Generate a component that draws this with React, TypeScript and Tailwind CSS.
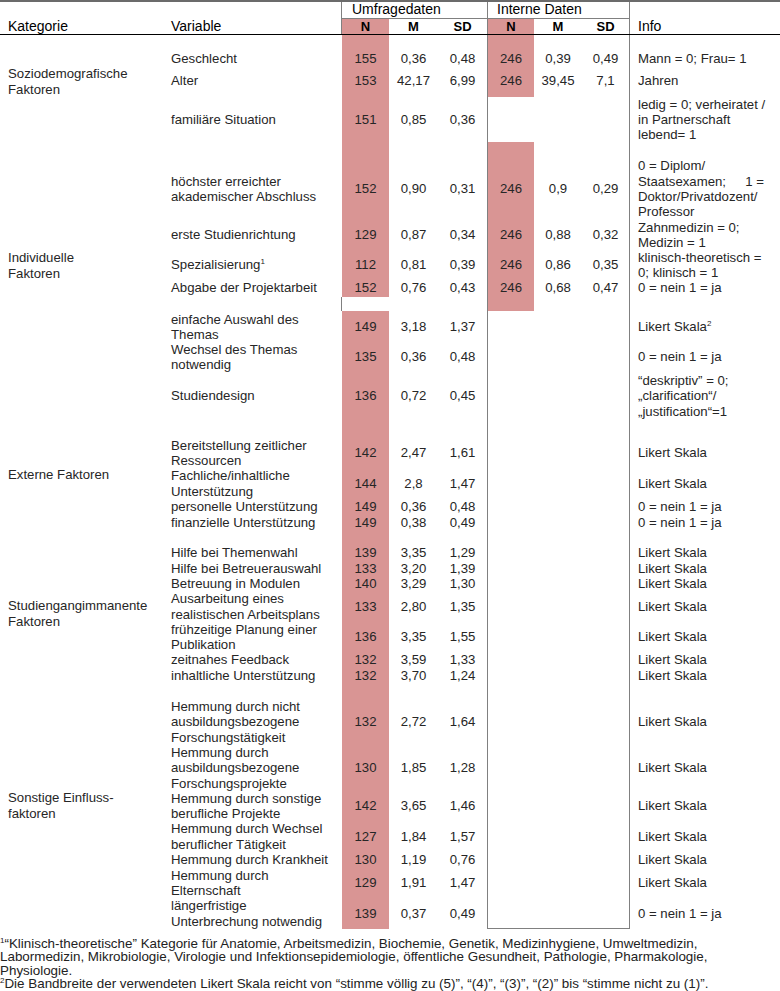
import React from "react";

type Row = {
  v: string[];
  n: string;
  m: string;
  sd: string;
  iN?: string;
  iM?: string;
  iSD?: string;
  info: React.ReactNode[];
  h: string;
  pad: string;
  uPink: boolean;
  iPink: boolean;
};

type Group = {
  label: string[];
  labelPad: string;
  rows: Row[];
};

const Sup: React.FC<{ children: React.ReactNode }> = ({ children }) => (
  <span className="relative -top-[5px] text-[8px] leading-none">{children}</span>
);

const likert = ["Likert Skala"];
const neinJa = ["0 = nein 1 = ja"];

const groups: Group[] = [
  {
    label: ["Soziodemografische", "Faktoren"],
    labelPad: "pb-[14px]",
    rows: [
      { v: ["Geschlecht"], n: "155", m: "0,36", sd: "0,48", iN: "246", iM: "0,39", iSD: "0,49", info: ["Mann = 0; Frau= 1"], h: "h-[35px]", pad: "pt-[13px]", uPink: true, iPink: true },
      { v: ["Alter"], n: "153", m: "42,17", sd: "6,99", iN: "246", iM: "39,45", iSD: "7,1", info: ["Jahren"], h: "h-[27px]", pad: "pb-[5px]", uPink: true, iPink: true },
      { v: ["familiäre Situation"], n: "151", m: "0,85", sd: "0,36", info: ["ledig = 0; verheiratet /", "in Partnerschaft", "lebend= 1"], h: "h-[45px]", pad: "", uPink: true, iPink: false },
    ],
  },
  {
    label: ["Individuelle", "Faktoren"],
    labelPad: "pt-[92px]",
    rows: [
      {
        v: ["höchster erreichter", "akademischer Abschluss"],
        n: "152", m: "0,90", sd: "0,31", iN: "246", iM: "0,9", iSD: "0,29",
        info: [
          "0 = Diplom/",
          <div key="s" className="flex w-[126px] justify-between">
            <span>Staatsexamen;</span>
            <span>1 =</span>
          </div>,
          "Doktor/Privatdozent/",
          "Professor",
        ],
        h: "h-[78px]", pad: "pt-[16px]", uPink: true, iPink: true,
      },
      { v: ["erste Studienrichtung"], n: "129", m: "0,87", sd: "0,34", iN: "246", iM: "0,88", iSD: "0,32", info: ["Zahnmedizin = 0;", "Medizin = 1"], h: "h-[30px]", pad: "", uPink: true, iPink: true },
      {
        v: ["Spezialisierung"], n: "112", m: "0,81", sd: "0,39", iN: "246", iM: "0,86", iSD: "0,35",
        info: ["klinisch-theoretisch =", "0; klinisch = 1"], h: "h-[28px]", pad: "pt-[2px]", uPink: true, iPink: true,
      },
      { v: ["Abgabe der Projektarbeit"], n: "152", m: "0,76", sd: "0,43", iN: "246", iM: "0,68", iSD: "0,47", info: neinJa, h: "h-[19px]", pad: "pt-[1px]", uPink: true, iPink: true },
    ],
  },
  {
    label: ["Externe Faktoren"],
    labelPad: "pt-[123px]",
    rows: [
      { v: [], n: "", m: "", sd: "", info: [], h: "h-[14px]", pad: "", uPink: false, iPink: true },
      { v: ["einfache Auswahl des", "Themas"], n: "149", m: "3,18", sd: "1,37", info: [<span key="l">Likert Skala<Sup>2</Sup></span>], h: "h-[31px]", pad: "pt-[1px]", uPink: true, iPink: false },
      { v: ["Wechsel des Themas", "notwendig"], n: "135", m: "0,36", sd: "0,48", info: neinJa, h: "h-[30px]", pad: "", uPink: true, iPink: false },
      { v: ["Studiendesign"], n: "136", m: "0,72", sd: "0,45", info: ["“deskriptiv” = 0;", "„clarification“/", "„justification“=1"], h: "h-[53px]", pad: "pb-[5px]", uPink: true, iPink: false },
      { v: ["Bereitstellung zeitlicher", "Ressourcen"], n: "142", m: "2,47", sd: "1,61", info: likert, h: "h-[43px]", pad: "pt-[13px]", uPink: true, iPink: false },
      { v: ["Fachliche/inhaltliche", "Unterstützung"], n: "144", m: "2,8", sd: "1,47", info: likert, h: "h-[31px]", pad: "", uPink: true, iPink: false },
      { v: ["personelle Unterstützung"], n: "149", m: "0,36", sd: "0,48", info: neinJa, h: "h-[16px]", pad: "", uPink: true, iPink: false },
      { v: ["finanzielle Unterstützung"], n: "149", m: "0,38", sd: "0,49", info: neinJa, h: "h-[15px]", pad: "", uPink: true, iPink: false },
    ],
  },
  {
    label: ["Studiengangimmanente", "Faktoren"],
    labelPad: "pt-[13px]",
    rows: [
      { v: ["Hilfe bei Themenwahl"], n: "139", m: "3,35", sd: "1,29", info: likert, h: "h-[31px]", pad: "pt-[15px]", uPink: true, iPink: false },
      { v: ["Hilfe bei Betreuerauswahl"], n: "133", m: "3,20", sd: "1,39", info: likert, h: "h-[15px]", pad: "", uPink: true, iPink: false },
      { v: ["Betreuung in Modulen"], n: "140", m: "3,29", sd: "1,30", info: likert, h: "h-[15px]", pad: "", uPink: true, iPink: false },
      { v: ["Ausarbeitung eines", "realistischen Arbeitsplans"], n: "133", m: "2,80", sd: "1,35", info: likert, h: "h-[31px]", pad: "", uPink: true, iPink: false },
      { v: ["frühzeitige Planung einer", "Publikation"], n: "136", m: "3,35", sd: "1,55", info: likert, h: "h-[30px]", pad: "", uPink: true, iPink: false },
      { v: ["zeitnahes Feedback"], n: "132", m: "3,59", sd: "1,33", info: likert, h: "h-[16px]", pad: "", uPink: true, iPink: false },
      { v: ["inhaltliche Unterstützung"], n: "132", m: "3,70", sd: "1,24", info: likert, h: "h-[16px]", pad: "", uPink: true, iPink: false },
    ],
  },
  {
    label: ["Sonstige Einfluss-", "faktoren"],
    labelPad: "pb-[2px]",
    rows: [
      { v: ["Hemmung durch nicht", "ausbildungsbezogene", "Forschungstätigkeit"], n: "132", m: "2,72", sd: "1,64", info: likert, h: "h-[61px]", pad: "pt-[15px]", uPink: true, iPink: false },
      { v: ["Hemmung durch", "ausbildungsbezogene", "Forschungsprojekte"], n: "130", m: "1,85", sd: "1,28", info: likert, h: "h-[46px]", pad: "", uPink: true, iPink: false },
      { v: ["Hemmung durch sonstige", "berufliche Projekte"], n: "142", m: "3,65", sd: "1,46", info: likert, h: "h-[30px]", pad: "", uPink: true, iPink: false },
      { v: ["Hemmung durch Wechsel", "beruflicher Tätigkeit"], n: "127", m: "1,84", sd: "1,57", info: likert, h: "h-[31px]", pad: "", uPink: true, iPink: false },
      { v: ["Hemmung durch Krankheit"], n: "130", m: "1,19", sd: "0,76", info: likert, h: "h-[16px]", pad: "", uPink: true, iPink: false },
      { v: ["Hemmung durch", "Elternschaft"], n: "129", m: "1,91", sd: "1,47", info: likert, h: "h-[30px]", pad: "", uPink: true, iPink: false },
      { v: ["längerfristige", "Unterbrechung notwendig"], n: "139", m: "0,37", sd: "0,49", info: neinJa, h: "h-[31px]", pad: "", uPink: true, iPink: false },
    ],
  },
];

const TableRow: React.FC<{ r: Row; last: boolean }> = ({ r, last }) => {
  const cell = `flex items-center ${r.pad}`;
  return (
    <div className={`flex ${r.h}`}>
      <div className={`w-[170px] ${cell}`}>
        <div>
          {r.v.map((l) => (
            <div key={l} className="whitespace-nowrap">
              {l}
              {l === "Spezialisierung" && <Sup>1</Sup>}
            </div>
          ))}
        </div>
      </div>
      <div
        className={`w-[48px] border-l justify-center ${cell} ${
          r.uPink ? "bg-[#d99594] border-white" : "border-[#808080]"
        }`}
      >
        {r.n}
      </div>
      <div className={`w-[49px] justify-center ${cell}`}>{r.m}</div>
      <div className={`w-[49px] justify-center ${cell}`}>{r.sd}</div>
      <div className={`flex w-[143px] border-l border-r border-[#808080] ${last ? "border-b" : ""}`}>
        <div className={`w-[46px] justify-center ${cell} ${r.iPink ? "bg-[#d99594]" : ""}`}>{r.iN}</div>
        <div className={`w-[48px] justify-center ${cell}`}>{r.iM}</div>
        <div className={`w-[47px] justify-center ${cell}`}>{r.iSD}</div>
      </div>
      <div className={`w-[150px] pl-2 ${cell}`}>
        <div>
          {r.info.map((l, i) => (
            <div key={i} className="whitespace-nowrap">
              {l}
            </div>
          ))}
        </div>
      </div>
    </div>
  );
};

export default function App() {
  return (
    <div className="w-[780px] min-h-[991px] bg-white font-['Liberation_Sans',Arial,sans-serif] text-[13.2px] leading-[15.3px] text-[#262626]">
      {/* header */}
      <div className="flex h-[35px] border-t-2 border-b border-t-[#6b6b6b] border-b-black text-[14px] text-black">
        <div className="flex w-[171px] items-end pl-2 leading-[15px]">Kategorie</div>
        <div className="flex w-[170px] items-end leading-[15px]">Variable</div>
        <div className="flex w-[146px] flex-col border-l border-[#808080]">
          <div className="h-[17px] border-b border-[#808080] pl-[10px] leading-[15px]">Umfragedaten</div>
          <div className="flex h-[15px] text-[13px] font-bold leading-[15px]">
            <div className="w-[47px] bg-[#d99594] text-center">N</div>
            <div className="w-[49px] text-center">M</div>
            <div className="w-[49px] text-center">SD</div>
          </div>
        </div>
        <div className="flex w-[143px] flex-col border-l border-r border-[#808080]">
          <div className="h-[17px] border-b border-[#808080] pl-[9px] leading-[15px]">Interne Daten</div>
          <div className="flex h-[15px] text-[13px] font-bold leading-[15px]">
            <div className="w-[46px] bg-[#d99594] text-center">N</div>
            <div className="w-[48px] text-center">M</div>
            <div className="w-[47px] text-center">SD</div>
          </div>
        </div>
        <div className="flex w-[150px] items-end pl-2 leading-[15px]">Info</div>
      </div>

      {/* body */}
      {groups.map((g, gi) => (
        <div key={gi} className="flex">
          <div className={`flex w-[171px] flex-col justify-center pl-2 ${g.labelPad}`}>
            {g.label.map((l) => (
              <div key={l}>{l}</div>
            ))}
          </div>
          <div className="flex w-[609px] flex-col">
            {g.rows.map((r, ri) => (
              <TableRow key={ri} r={r} last={gi === groups.length - 1 && ri === g.rows.length - 1} />
            ))}
          </div>
        </div>
      ))}

      {/* footnotes */}
      <div className="mt-[8px] font-['Liberation_Sans_Narrow','Liberation_Sans',sans-serif] text-[13.4px] leading-[13.4px] text-[#222]">
        <div className="whitespace-nowrap">
          <Sup>1</Sup>“Klinisch-theoretische” Kategorie für Anatomie, Arbeitsmedizin, Biochemie, Genetik, Medizinhygiene, Umweltmedizin,
        </div>
        <div className="whitespace-nowrap">
          Labormedizin, Mikrobiologie, Virologie und Infektionsepidemiologie, öffentliche Gesundheit, Pathologie, Pharmakologie,
        </div>
        <div className="whitespace-nowrap">Physiologie.</div>
        <div className="whitespace-nowrap">
          <Sup>2</Sup>Die Bandbreite der verwendeten Likert Skala reicht von “stimme völlig zu (5)”, “(4)”, “(3)”, “(2)” bis “stimme nicht zu (1)”.
        </div>
      </div>
    </div>
  );
}
